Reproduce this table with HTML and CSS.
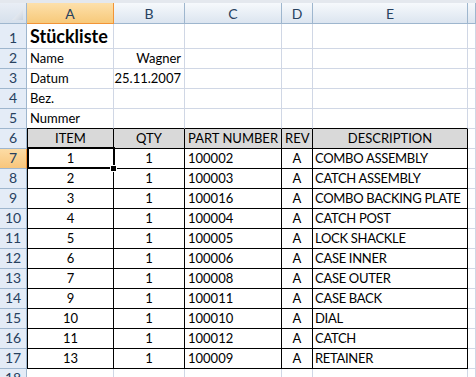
FILE: index.html
```html
<!DOCTYPE html>
<html lang="de">
<head>
  <meta charset="UTF-8">
  <title>Stückliste</title>
  <link rel="stylesheet" href="styles.css">
</head>
<body>
  <div class="strip"></div>
  <div class="sheet">
    <!-- column headers -->
    <div class="corner"></div>
    <div class="hd sel">A</div>
    <div class="hd">B</div>
    <div class="hd">C</div>
    <div class="hd">D</div>
    <div class="hd">E</div>
    <div class="hd"></div>

    <div class="rh">1</div>
    <div class="c title">Stückliste</div>
    <div class="c"></div><div class="c"></div><div class="c"></div><div class="c"></div><div class="c"></div>

    <div class="rh">2</div>
    <div class="c">Name</div>
    <div class="c rt">Wagner</div>
    <div class="c"></div><div class="c"></div><div class="c"></div><div class="c"></div>

    <div class="rh">3</div>
    <div class="c">Datum</div>
    <div class="c rt">25.11.2007</div>
    <div class="c"></div><div class="c"></div><div class="c"></div><div class="c"></div>

    <div class="rh">4</div>
    <div class="c">Bez.</div>
    <div class="c"></div><div class="c"></div><div class="c"></div><div class="c"></div><div class="c"></div>

    <div class="rh">5</div>
    <div class="c top">Nummer</div>
    <div class="c top"></div><div class="c top"></div><div class="c top"></div><div class="c top"></div>
    <div class="c"></div>

    <!-- parts list -->
    <div class="rh">6</div>
    <div class="c tb th first ctr">ITEM</div>
    <div class="c tb th ctr">QTY</div>
    <div class="c tb th">PART NUMBER</div>
    <div class="c tb th">REV</div>
    <div class="c tb th ctr">DESCRIPTION</div>
    <div class="c"></div>

    <div class="rh sel">7</div>
    <div class="c tb first ctr active">1<span class="handle"></span></div>
    <div class="c tb ctr">1</div>
    <div class="c tb">100002</div>
    <div class="c tb ctr">A</div>
    <div class="c tb desc">COMBO ASSEMBLY</div>
    <div class="c"></div>

    <div class="rh">8</div>
    <div class="c tb first ctr">2</div>
    <div class="c tb ctr">1</div>
    <div class="c tb">100003</div>
    <div class="c tb ctr">A</div>
    <div class="c tb desc">CATCH ASSEMBLY</div>
    <div class="c"></div>

    <div class="rh">9</div>
    <div class="c tb first ctr">3</div>
    <div class="c tb ctr">1</div>
    <div class="c tb">100016</div>
    <div class="c tb ctr">A</div>
    <div class="c tb desc">COMBO BACKING PLATE</div>
    <div class="c"></div>

    <div class="rh">10</div>
    <div class="c tb first ctr">4</div>
    <div class="c tb ctr">1</div>
    <div class="c tb">100004</div>
    <div class="c tb ctr">A</div>
    <div class="c tb desc">CATCH POST</div>
    <div class="c"></div>

    <div class="rh">11</div>
    <div class="c tb first ctr">5</div>
    <div class="c tb ctr">1</div>
    <div class="c tb">100005</div>
    <div class="c tb ctr">A</div>
    <div class="c tb desc">LOCK SHACKLE</div>
    <div class="c"></div>

    <div class="rh">12</div>
    <div class="c tb first ctr">6</div>
    <div class="c tb ctr">1</div>
    <div class="c tb">100006</div>
    <div class="c tb ctr">A</div>
    <div class="c tb desc">CASE INNER</div>
    <div class="c"></div>

    <div class="rh">13</div>
    <div class="c tb first ctr">7</div>
    <div class="c tb ctr">1</div>
    <div class="c tb">100008</div>
    <div class="c tb ctr">A</div>
    <div class="c tb desc">CASE OUTER</div>
    <div class="c"></div>

    <div class="rh">14</div>
    <div class="c tb first ctr">9</div>
    <div class="c tb ctr">1</div>
    <div class="c tb">100011</div>
    <div class="c tb ctr">A</div>
    <div class="c tb desc">CASE BACK</div>
    <div class="c"></div>

    <div class="rh">15</div>
    <div class="c tb first ctr">10</div>
    <div class="c tb ctr">1</div>
    <div class="c tb">100010</div>
    <div class="c tb ctr">A</div>
    <div class="c tb desc">DIAL</div>
    <div class="c"></div>

    <div class="rh">16</div>
    <div class="c tb first ctr">11</div>
    <div class="c tb ctr">1</div>
    <div class="c tb">100012</div>
    <div class="c tb ctr">A</div>
    <div class="c tb desc">CATCH</div>
    <div class="c"></div>

    <div class="rh">17</div>
    <div class="c tb first ctr">13</div>
    <div class="c tb ctr">1</div>
    <div class="c tb">100009</div>
    <div class="c tb ctr">A</div>
    <div class="c tb desc">RETAINER</div>
    <div class="c"></div>

    <div class="rh">18</div>
    <div class="c"></div><div class="c"></div><div class="c"></div><div class="c"></div><div class="c"></div><div class="c"></div>
  </div>
</body>
</html>
```

FILE: styles.css
```css
body {
  margin: 0;
  width: 476px;
  height: 377px;
  overflow: hidden;
  background: #fff;
  font-family: "Lato", "Open Sans", sans-serif;
  font-size: 13px;
  color: #000;
}

.strip {
  height: 3px;
  background: #e4e8ee;
}

.sheet {
  display: grid;
  grid-template-columns: 27px 87px 71px 97px 31px 155px 1fr;
  grid-template-rows: 21px 25px repeat(17, 20px);
}

.sheet > div {
  box-sizing: border-box;
  white-space: nowrap;
}

/* column and row headings */
.corner {
  position: relative;
  background: linear-gradient(#e9eef5, #d6e0ec);
  border-right: 1px solid #9eb6ce;
  border-bottom: 1px solid #9eb6ce;
}
.corner::after {
  content: "";
  position: absolute;
  right: 3px;
  bottom: 3px;
  width: 11px;
  height: 11px;
  background: linear-gradient(135deg, #fdfdfe, #c9d3df);
  clip-path: polygon(100% 0, 100% 100%, 0 100%);
}

.hd {
  display: flex;
  align-items: center;
  justify-content: center;
  padding-top: 1px;
  background: linear-gradient(#f6f9fc, #dce5f0);
  border-right: 1px solid #9eb6ce;
  border-bottom: 1px solid #9eb6ce;
  color: #27415f;
  font-size: 14px;
}

.rh {
  display: flex;
  align-items: flex-end;
  justify-content: center;
  padding-bottom: 2px;
  background: #e4ecf7;
  border-right: 1px solid #9eb6ce;
  border-bottom: 1px solid #9eb6ce;
  color: #27415f;
  font-size: 14px;
}

.hd.sel {
  background: linear-gradient(#fde0ab, #f7c97a);
  border-right-color: #f29436;
  border-bottom-color: #f29436;
}
.rh.sel {
  background: linear-gradient(#fcdca5, #f8c67c);
  border-right-color: #f29436;
}

/* cells */
.c {
  display: flex;
  align-items: flex-end;
  padding: 0 3px 2px;
  border-right: 1px solid #d0d7e5;
  border-bottom: 1px solid #d0d7e5;
}
.rt { justify-content: flex-end; }
.ctr { justify-content: center; }

.title {
  font-weight: bold;
  font-size: 18px;
  padding-bottom: 1px;
}

.c.top { border-bottom-color: #000; }

.tb {
  border-right-color: #000;
  border-bottom-color: #000;
}
.tb.first { border-left: 1px solid #000; }
.th { background: #d9d9d9; }
.desc {
  padding-left: 2px;
  letter-spacing: -0.3px;
}

/* active cell with fill handle */
.active { position: relative; }
.active::after {
  content: "";
  position: absolute;
  left: -1px;
  top: -2px;
  right: -2px;
  bottom: -1px;
  border: 2px solid #000;
}
.handle {
  position: absolute;
  right: -4px;
  bottom: -4px;
  width: 5px;
  height: 5px;
  background: #000;
  border: 1px solid #fff;
  z-index: 1;
}
```
